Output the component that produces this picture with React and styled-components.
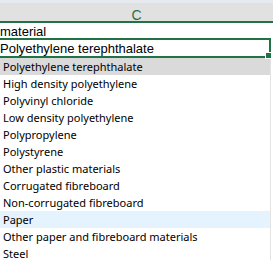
import React from 'react'
import styled, { createGlobalStyle } from 'styled-components'

const GlobalStyle = createGlobalStyle`
  html, body {
    margin: 0;
    padding: 0;
    background: #ffffff;
  }
`

const Sheet = styled.div`
  width: 273px;
  height: 260px;
  overflow: hidden;
  display: flex;
  flex-direction: column;
  background: #ffffff;
`

const TopStrip = styled.div`
  height: 3px;
  flex-shrink: 0;
  background: #e6e9ed;
`

const ColumnHeader = styled.div`
  box-sizing: border-box;
  height: 20px;
  flex-shrink: 0;
  display: flex;
  align-items: center;
  justify-content: center;
  padding-top: 5px;
  background: #e1e1e1;
  border-bottom: 2px solid #217346;
  font-family: 'Liberation Sans', Arial, sans-serif;
  font-size: 14px;
  color: #217346;
`

const Cell = styled.div`
  position: relative;
  box-sizing: border-box;
  flex-shrink: 0;
  height: ${({ active }) => (active ? '20px' : '15px')};
  width: ${({ active }) => (active ? '271px' : '273px')};
  display: flex;
  align-items: center;
  padding-top: ${({ active }) => (active ? '1px' : '2px')};
  border: ${({ active }) => (active ? '2px solid #217346' : 'none')};
  border-left: none;
  font-family: 'Liberation Sans', Arial, sans-serif;
  font-size: 13px;
  color: #000000;
  white-space: nowrap;
`

const FillHandle = styled.span`
  position: absolute;
  right: -3px;
  bottom: -3px;
  width: 5px;
  height: 5px;
  background: #217346;
  border: 1px solid #ffffff;
`

const Dropdown = styled.div`
  box-sizing: border-box;
  width: 271px;
  flex: 1;
  display: flex;
  flex-direction: column;
  border-right: 1px solid #e3e3e3;
  background: #ffffff;
`

const Option = styled.div`
  height: 17px;
  flex-shrink: 0;
  display: flex;
  align-items: center;
  padding-left: 3px;
  font-family: 'Noto Sans', sans-serif;
  font-size: 11px;
  color: #000000;
  white-space: nowrap;
  background: ${({ selected, hover }) => (selected ? '#dadada' : hover ? '#e5f3ff' : 'transparent')};
`

const options = [
  'Polyethylene terephthalate',
  'High density polyethylene',
  'Polyvinyl chloride',
  'Low density polyethylene',
  'Polypropylene',
  'Polystyrene',
  'Other plastic materials',
  'Corrugated fibreboard',
  'Non-corrugated fibreboard',
  'Paper',
  'Other paper and fibreboard materials',
  'Steel',
]

export default function App() {
  return (
    <>
      <GlobalStyle />
      <Sheet>
        <TopStrip />
        <ColumnHeader>C</ColumnHeader>
        <Cell>material</Cell>
        <Cell active>
          Polyethylene terephthalate
          <FillHandle />
        </Cell>
        <Dropdown>
          {options.map((name, index) => (
            <Option key={name} selected={index === 0} hover={name === 'Paper'}>
              {name}
            </Option>
          ))}
        </Dropdown>
      </Sheet>
    </>
  )
}
